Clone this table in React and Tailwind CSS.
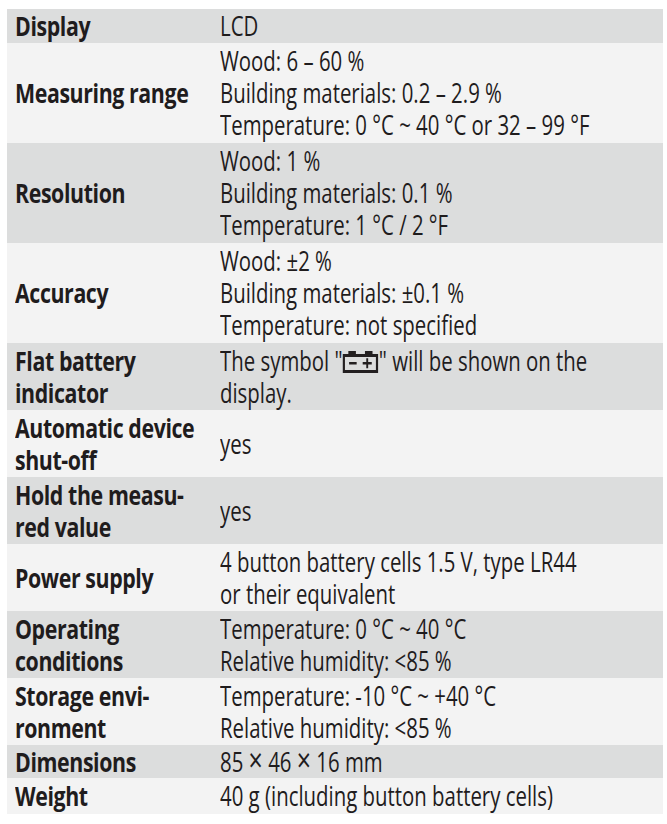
const font = { fontFamily: '"Open Sans", "Liberation Sans", sans-serif' };

function Battery() {
    return (
        <svg width="48" height="23" viewBox="0 0 48 23" className="inline-block align-[-2px]">
            <rect x="8" y="1" width="10" height="4" fill="#231f20" />
            <rect x="30" y="1" width="10" height="4" fill="#231f20" />
            <rect x="2" y="5.5" width="44" height="16" fill="none" stroke="#231f20" strokeWidth="3" />
            <rect x="9" y="12" width="10" height="2.5" fill="#231f20" />
            <rect x="27" y="12" width="12" height="2.5" fill="#231f20" />
            <rect x="31.75" y="8.25" width="2.5" height="10" fill="#231f20" />
        </svg>
    );
}

const rows = [
    { label: ['Display'], value: ['LCD'], py: 'py-[1px]' },
    { label: ['Measuring range'], value: ['Wood: 6 – 60 %', 'Building materials: 0.2 – 2.9 %', 'Temperature: 0 °C ~ 40 °C or 32 – 99 °F'], py: 'py-[2px]' },
    { label: ['Resolution'], value: ['Wood: 1 %', 'Building materials: 0.1 %', 'Temperature: 1 °C / 2 °F'], py: 'py-[2px]' },
    { label: ['Accuracy'], value: ['Wood: ±2 %', 'Building materials: ±0.1 %', 'Temperature: not specified'], py: 'py-[2px]' },
    { label: ['Flat battery', 'indicator'], value: ['battery', 'display.'], py: 'py-[1.5px]' },
    { label: ['Automatic device', 'shut-off'], value: ['yes'], py: 'py-[1.5px]' },
    { label: ['Hold the measu-', 'red value'], value: ['yes'], py: 'py-[1.5px]' },
    { label: ['Power supply'], value: ['4 button battery cells 1.5 V, type LR44', 'or their equivalent'], py: 'py-[1.5px]' },
    { label: ['Operating', 'conditions'], value: ['Temperature: 0 °C ~ 40 °C', 'Relative humidity: <85 %'], py: 'py-[1.5px]' },
    { label: ['Storage envi-', 'ronment'], value: ['Temperature: -10 °C ~ +40 °C', 'Relative humidity: <85 %'], py: 'py-[1.5px]' },
    { label: ['Dimensions'], value: ['dims'], py: 'py-[0.5px]' },
    { label: ['Weight'], value: ['40 g (including button battery cells)'], py: 'py-[2px]' },
];

function Line({ text }) {
    if (text === 'battery') {
        return <div>The symbol "<Battery />" will be shown on the</div>;
    }
    if (text === 'dims') {
        return (
            <div className="h-[32px]">
                85 <span className="text-[33px] leading-[0]">×</span> 46 <span className="text-[33px] leading-[0]">×</span> 16 mm
            </div>
        );
    }
    return <div>{text}</div>;
}

export default function App() {
    return (
        <div className="min-h-[824px] w-[667px] bg-white pt-[9px] px-[7px] text-[#1f1c1d]" style={font}>
            <div className="flex flex-col w-[656px] overflow-hidden">
                {rows.map((row, i) => (
                    <div
                        key={row.label[0]}
                        className={`grid grid-cols-[213px_443px] items-center text-[27px] leading-[32px] whitespace-nowrap ${row.py} ${i % 2 === 0 ? 'bg-[#dcdddd]' : 'bg-[#f3f3f3]'}`}
                    >
                        <div className="pl-2 font-bold tracking-[-0.5px]">
                            <div className="origin-left scale-x-[0.79]">
                                {row.label.map(l => <div key={l}>{l}</div>)}
                            </div>
                        </div>
                        <div>
                            <div className="origin-left scale-x-[0.755]">
                                {row.value.map(v => <Line key={v} text={v} />)}
                            </div>
                        </div>
                    </div>
                ))}
            </div>
        </div>
    );
}
